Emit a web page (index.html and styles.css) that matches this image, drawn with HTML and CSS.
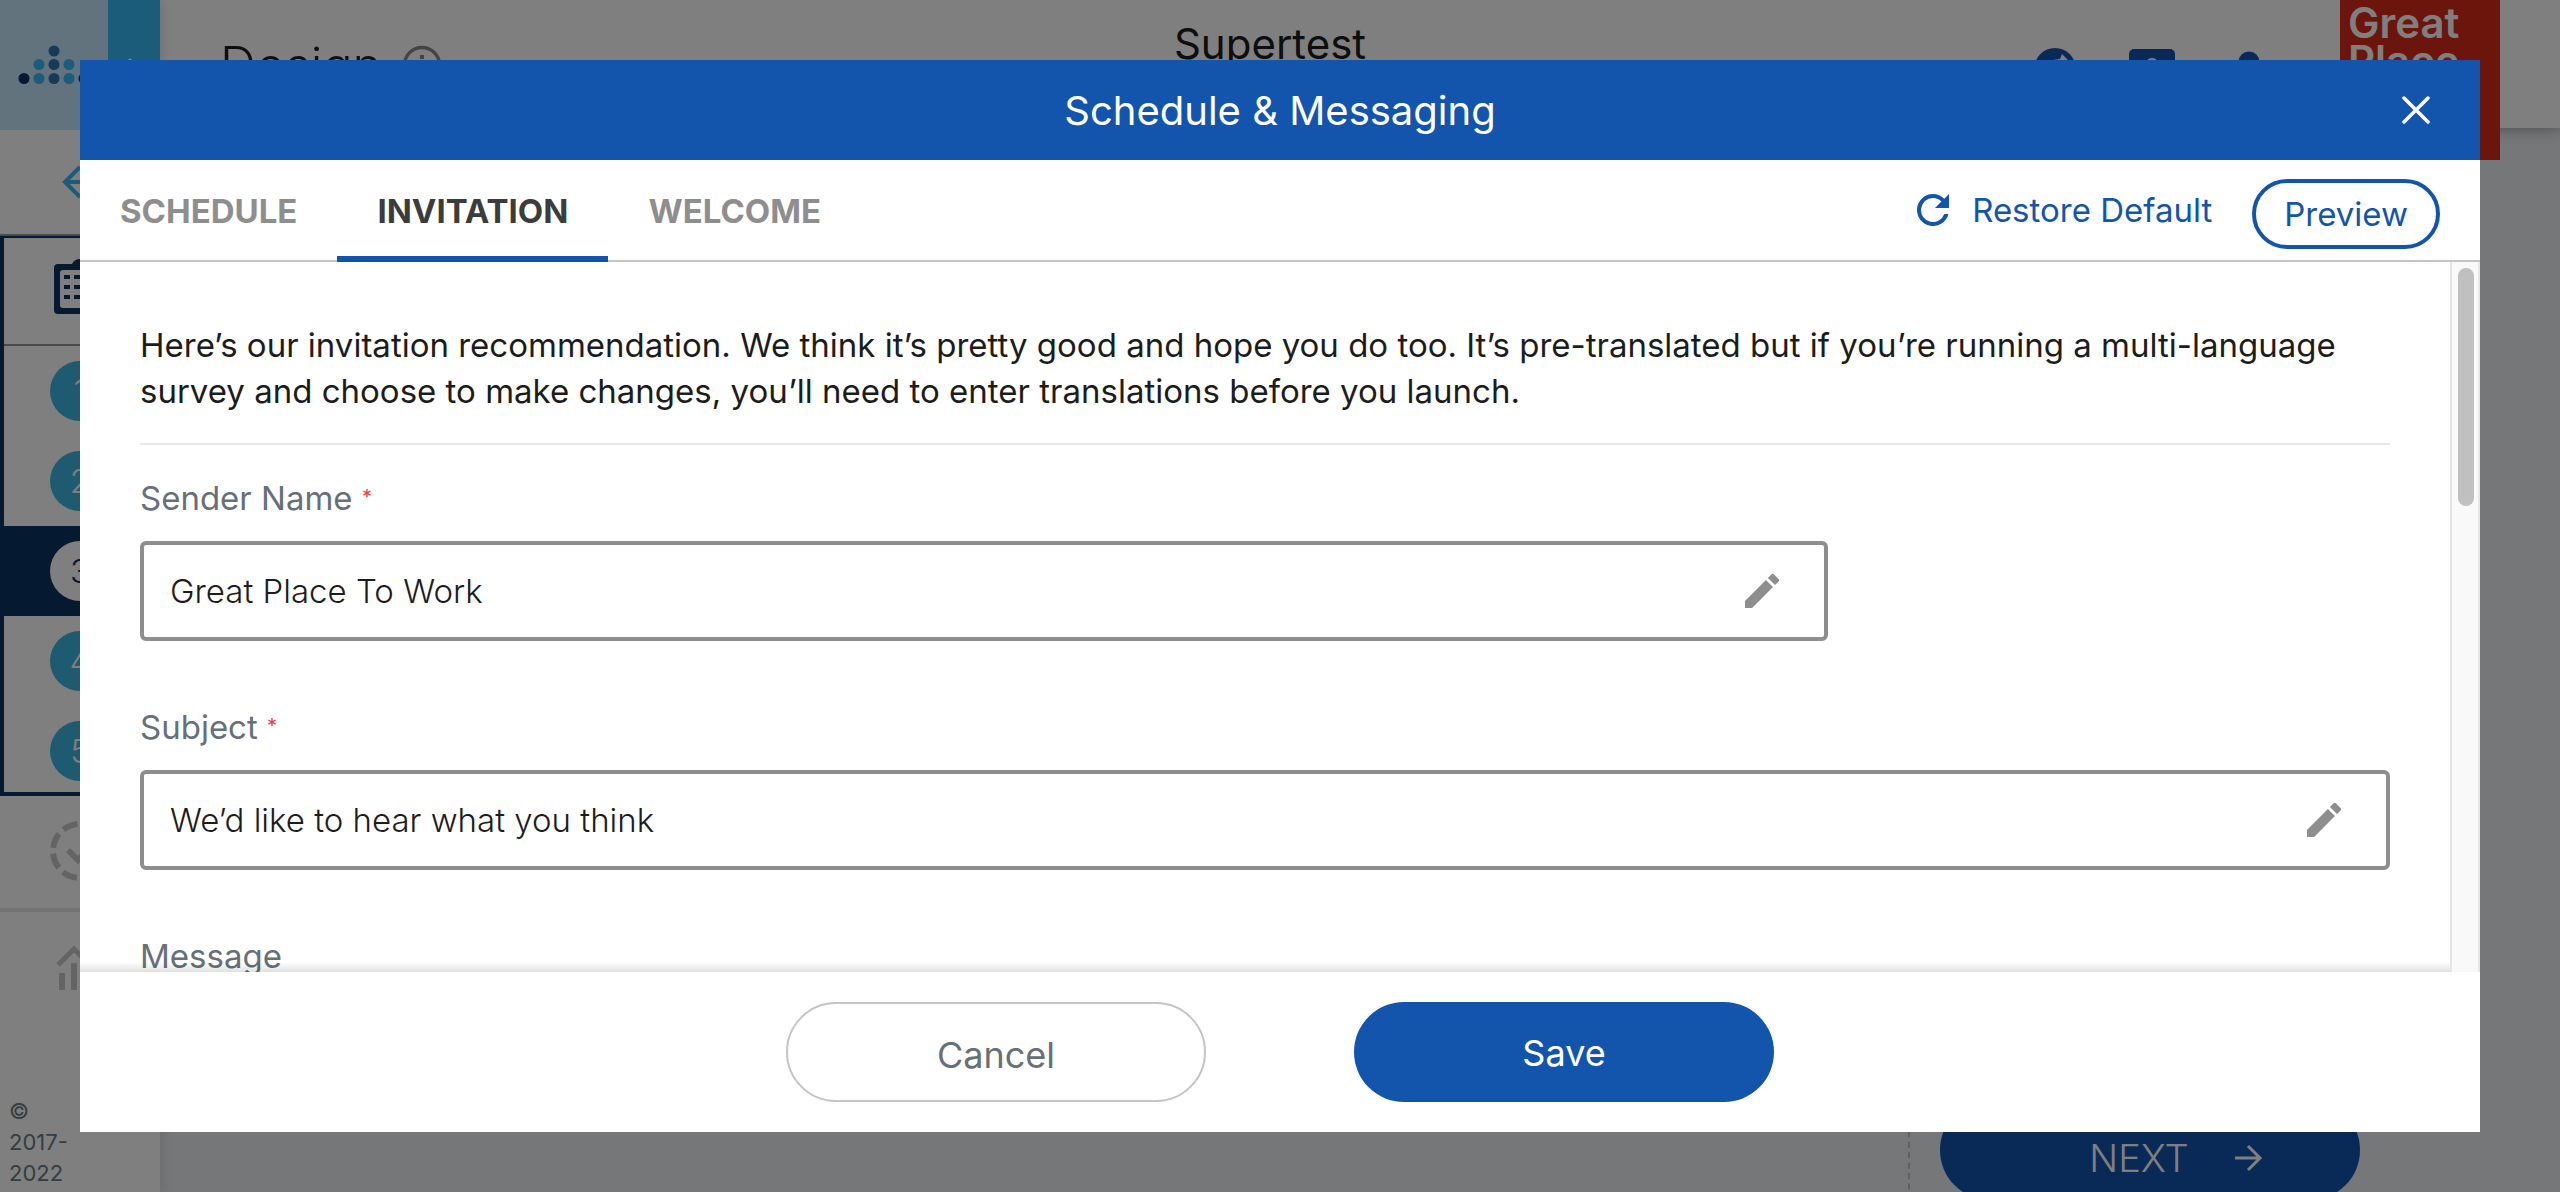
FILE: index.html
```html
<!DOCTYPE html>
<html lang="en">
<head>
<meta charset="utf-8">
<meta name="viewport" content="width=device-width, initial-scale=1">
<title>Schedule &amp; Messaging</title>
<link rel="stylesheet" href="styles.css">
</head>
<body>
<div class="app">
  <nav class="sidebar" aria-label="Survey steps">
    <div class="brand">
      <a class="brand-logo" href="#" aria-label="Home">
        <svg width="108" height="130" viewBox="0 0 108 130">
          <circle cx="54" cy="51" r="5.5" fill="#2b74b4"/>
          <circle cx="39" cy="64.500" r="5.500" fill="#38b8f6"/><circle cx="54" cy="64.500" r="5.500" fill="#2b74b4"/><circle cx="69" cy="64.500" r="5.500" fill="#38b8f6"/>
          <circle cx="24" cy="78.500" r="5.500" fill="#0a3460"/><circle cx="39" cy="78.500" r="5.500" fill="#38b8f6"/><circle cx="54" cy="78.500" r="5.500" fill="#2b74b4"/><circle cx="69" cy="78.500" r="5.500" fill="#38b8f6"/><circle cx="84" cy="78.500" r="5.500" fill="#0a3460"/>
        </svg>
      </a>
      <button class="brand-toggle" type="button" aria-label="Collapse menu">
        <svg width="52" height="130" viewBox="0 0 52 130" fill="none" stroke="#fff" stroke-width="3"><path d="M15 67l7-7 7 7"/></svg>
      </button>
    </div>
    <a class="back" href="#" aria-label="Back">
      <svg width="36" height="36" viewBox="0 0 36 36" fill="none" stroke="#38b8f6" stroke-width="4"><path d="M18 3L3 18l15 15M3 18h31"/></svg>
    </a>
    <div class="design-group">
      <a class="group-head" href="#" aria-label="Design">
        <svg width="52" height="56" viewBox="0 0 52 56"><path fill="#0a3460" fill-rule="evenodd" d="M4 6h14a9 9 0 0 1 16 0h14a4 4 0 0 1 4 4v42a4 4 0 0 1-4 4H4a4 4 0 0 1-4-4V10a4 4 0 0 1 4-4zm5 6a3 3 0 0 0-3 3v32a3 3 0 0 0 3 3h34a3 3 0 0 0 3-3V15a3 3 0 0 0-3-3h-9H18zM10 17h6v4h-6zm10 0h22v4H20zM10 27h6v4h-6zm10 0h22v4H20zM10 37h6v4h-6zm10 0h22v4H20z"/></svg>
      </a>
      <ol class="steps">
        <li><a href="#">1</a></li>
        <li><a href="#">2</a></li>
        <li class="current"><a href="#">3</a></li>
        <li><a href="#">4</a></li>
        <li><a href="#">5</a></li>
      </ol>
    </div>
    <a class="stage stage-launch" href="#" aria-label="Launch">
      <svg width="60" height="60" viewBox="0 0 60 60" fill="none" stroke="#c8c8c8" stroke-width="6"><circle cx="30" cy="30" r="27" stroke-dasharray="15.200 6" stroke-dashoffset="-3"/><path d="M18 29l10 10 16-17"/></svg>
    </a>
    <a class="stage stage-report" href="#" aria-label="Report">
      <svg width="48" height="46" viewBox="0 0 48 46" fill="none" stroke="#c8c8c8"><path stroke-width="5" d="M2 20L18 4l14 14L46 4"/><path stroke-width="6" d="M6 28v17M18 18v27M30 28v17M42 18v27"/></svg>
    </a>
    <p class="copyright">© 2017-2022</p>
  </nav>

  <div class="main">
    <header class="topbar">
      <div class="topbar-inner">
        <h1 class="page-title">Design
          <svg width="40" height="40" viewBox="0 0 40 40"><circle cx="20" cy="20" r="17.500" fill="none" stroke="#888" stroke-width="3.500"/><path fill="#888" d="M18 10h4v4h-4zM18 17h4v13h-4z"/></svg>
        </h1>
        <span class="survey-name">Supertest</span>
        <div class="tools">
          <button type="button" aria-label="Explore"><svg width="48" height="48" viewBox="0 0 48 48"><circle cx="24" cy="24" r="21" fill="#1355ad"/><path fill="#fff" d="M22 15l7-1 2-5 7 7v12l-14 6z"/></svg></button>
          <button type="button" aria-label="Help"><svg width="48" height="48" viewBox="0 0 48 48"><rect x="1" y="4" width="46" height="38" rx="5" fill="#1355ad"/><circle cx="24" cy="20" r="7" fill="#fff"/></svg></button>
          <button type="button" aria-label="Account"><svg width="48" height="48" viewBox="0 0 48 48" fill="#1355ad"><circle cx="24" cy="17" r="10.500"/><path d="M4 44c0-12 8-16 20-16s20 4 20 16z"/></svg></button>
        </div>
      </div>
      <div class="company-logo">Great<br>Place</div>
    </header>
    <div class="workspace">
      <div class="page-actions">
        <button class="next" type="button">NEXT
          <svg width="28" height="28" viewBox="0 0 28 28" fill="none" stroke="#fff" stroke-width="3"><path d="M0 14h26M13 2l12 12-12 12"/></svg>
        </button>
      </div>
    </div>
  </div>
</div>

<div class="overlay">
  <section class="modal" role="dialog" aria-modal="true" aria-labelledby="dialog-title">
    <header class="modal-head">
      <h2 id="dialog-title">Schedule &amp; Messaging</h2>
      <button class="close" type="button" aria-label="Close">
        <svg width="28" height="28" viewBox="0 0 28 28" fill="none" stroke="#fff" stroke-width="3.500" stroke-linecap="round"><path d="M2 2l24 24M26 2L2 26"/></svg>
      </button>
    </header>
    <div class="tabbar">
      <div class="tabs" role="tablist">
        <button class="tab" role="tab" type="button">SCHEDULE</button>
        <button class="tab active" role="tab" type="button" aria-selected="true">INVITATION</button>
        <button class="tab" role="tab" type="button">WELCOME</button>
      </div>
      <div class="tab-actions">
        <button class="restore" type="button">
          <svg width="32" height="32" viewBox="4 4 16 16" fill="#1355ad"><path d="M17.650 6.350A7.958 7.958 0 0 0 12 4a8 8 0 1 0 7.730 10h-2.080A6 6 0 1 1 12 6c1.660 0 3.140.69 4.220 1.780L13 11h7V4z"/></svg>
          Restore Default
        </button>
        <button class="preview" type="button">Preview</button>
      </div>
    </div>
    <div class="modal-body">
      <form class="content">
        <p class="intro">Here’s our invitation recommendation. We think it’s pretty good and hope you do too. It’s pre-translated but if you’re running a multi-language survey and choose to make changes, you’ll need to enter translations before you launch.</p>
        <div class="field field-short">
          <label for="sender">Sender Name <span class="required">*</span></label>
          <div class="control">
            <input id="sender" type="text" value="Great Place To Work">
            <svg width="34" height="34" viewBox="3 3 18 18" fill="#8e8e8e"><path d="M3 17.250V21h3.750L17.810 9.940l-3.750-3.750zM20.710 7.040a1 1 0 0 0 0-1.410l-2.340-2.340a1 1 0 0 0-1.410 0l-1.830 1.830 3.750 3.750z"/></svg>
          </div>
        </div>
        <div class="field">
          <label for="subject">Subject <span class="required">*</span></label>
          <div class="control">
            <input id="subject" type="text" value="We’d like to hear what you think">
            <svg width="34" height="34" viewBox="3 3 18 18" fill="#8e8e8e"><path d="M3 17.250V21h3.750L17.810 9.940l-3.750-3.750zM20.710 7.040a1 1 0 0 0 0-1.410l-2.340-2.340a1 1 0 0 0-1.410 0l-1.830 1.830 3.750 3.750z"/></svg>
          </div>
        </div>
        <div class="field">
          <label for="message">Message</label>
          <textarea id="message" rows="6"></textarea>
        </div>
      </form>
      <div class="scroll-track"><div class="scroll-thumb"></div></div>
    </div>
    <footer class="modal-foot">
      <button class="cancel" type="button">Cancel</button>
      <button class="save" type="button">Save</button>
    </footer>
  </section>
</div>
</body>
</html>
```
FILE: styles.css
```css
* { box-sizing: border-box; }

body {
  margin: 0;
  height: 100vh;
  overflow: hidden;
  font-family: Inter, "Liberation Sans", sans-serif;
  font-size: 33px;
  color: #1c1c1c;
}

button, input, textarea { font: inherit; color: inherit; }
button { margin: 0; padding: 0; border: 0; background: none; cursor: pointer; }
svg { display: block; flex: none; }
a { color: inherit; text-decoration: none; }

/* Application behind the dialog */
.app { display: flex; height: 100vh; overflow: hidden; background: #ebeef2; }

.sidebar {
  position: relative;
  z-index: 3;
  display: flex;
  flex-direction: column;
  flex: none;
  width: 160px;
  background: #fff;
  box-shadow: 0 0 12px rgba(0, 0, 0, .15);
}
.brand { display: flex; height: 130px; flex: none; }
.brand-logo { width: 108px; background: #c6e6fa; }
.brand-toggle { width: 52px; background: #38b8f6; }
.back {
  display: flex;
  align-items: center;
  justify-content: center;
  height: 106px;
  flex: none;
  border-bottom: 2px solid #949494;
}
.design-group { border: 4px solid #0a3460; border-top-width: 2px; border-right: 0; flex: none; }
.group-head {
  display: flex;
  align-items: center;
  height: 108px;
  padding: 0 0 10px 50px;
  border-bottom: 2px solid #949494;
}
.steps { margin: 0; padding: 0; list-style: none; }
.steps li { display: flex; align-items: center; height: 90px; padding-left: 46px; }
.steps li:last-child { height: 86px; padding-top: 4px; }
.steps a {
  width: 60px;
  border-radius: 50%;
  background: #3cb4e0;
  color: #fff;
  font-weight: 300;
  line-height: 60px;
  text-align: center;
}
.steps .current { background: #0a3460; }
.steps .current a { background: #fff; color: #0a3460; }
.stage { display: flex; flex: none; }
.stage-launch { height: 116px; padding: 25px 50px; border-bottom: 4px solid #e6e6e6; }
.stage-report { padding: 33px 56px; }
.copyright {
  width: 90px;
  margin: auto 0 3px;
  padding-left: 9px;
  color: #6c7a82;
  font-size: 22px;
  line-height: 31px;
}

.main { display: flex; flex: 1; flex-direction: column; min-width: 0; }
.topbar {
  position: relative;
  z-index: 2;
  display: flex;
  align-items: flex-start;
  height: 128px;
  flex: none;
  padding: 0 60px;
  background: #fff;
  box-shadow: 0 2px 12px rgba(0, 0, 0, .3);
}
.topbar-inner {
  display: grid;
  grid-template-columns: 1fr auto 1fr;
  flex: 1;
  height: 128px;
  padding-right: 20px;
}
.page-title {
  display: flex;
  align-items: center;
  gap: 20px;
  height: 130px;
  margin: 0;
  font-size: 50px;
  font-weight: 300;
}
.survey-name { padding-top: 20px; font-size: 42px; line-height: 48px; }
.tools { display: flex; justify-content: flex-end; gap: 49px; padding: 45px 47px 0 0; }
.tools button { height: 48px; }
.company-logo {
  width: 160px;
  height: 160px;
  padding: 4px 8px;
  background: #d62a1a;
  color: #fff;
  font-size: 42px;
  font-weight: 600;
  line-height: 38px;
}
.workspace { display: flex; flex: 1; align-items: flex-end; justify-content: flex-end; padding-right: 200px; }
.page-actions { margin-bottom: -8px; padding-left: 30px; border-left: 2px dashed #c0c0c0; }
.next {
  display: flex;
  align-items: center;
  justify-content: center;
  gap: 46px;
  width: 420px;
  height: 100px;
  padding: 16px 0 0 52px;
  border-radius: 50px;
  background: #1355ad;
  color: #fff;
  font-size: 38px;
  font-weight: 300;
}

/* Dialog */
.overlay { position: fixed; inset: 0; z-index: 10; display: flex; padding: 60px 80px; background: rgba(0, 0, 0, .5); }
.modal { display: flex; flex: 1; flex-direction: column; min-width: 0; background: #fff; }
.modal-head {
  display: grid;
  grid-template-columns: 1fr auto 1fr;
  align-items: center;
  height: 100px;
  flex: none;
  padding: 0 50px;
  background: #1355ad;
  color: #fff;
}
.modal-head h2 { grid-column: 2; margin: 0; padding-top: 2px; font-size: 40px; font-weight: 400; line-height: 48px; }
.close { justify-self: end; }

.tabbar { display: flex; justify-content: space-between; height: 102px; flex: none; border-bottom: 2px solid #c4c4c4; }
.tabs { display: flex; height: 102px; }
.tab { padding: 6px 40px 0; border-bottom: 6px solid transparent; color: #8e8e8e; font-weight: 700; }
.tab.active { border-bottom-color: #1355ad; color: #3c3c3c; }
.tab-actions { display: flex; align-items: center; gap: 40px; padding-right: 40px; color: #1355ad; }
.restore { display: flex; align-items: center; gap: 23px; }
.preview { height: 70px; margin-top: 8px; padding: 0 28px; border: 4px solid #1355ad; border-radius: 35px; }

.modal-body { display: flex; flex: 1; min-height: 0; }
.content { position: relative; flex: 1; padding: 60px 60px 0; overflow: hidden; }
.content::after {
  content: "";
  position: absolute;
  inset: auto 0 0;
  height: 10px;
  background: linear-gradient(rgba(0, 0, 0, 0), rgba(0, 0, 0, .12));
}
.intro { margin: 0 0 30px; padding-bottom: 29px; border-bottom: 2px solid #e8e8e8; line-height: 46px; }
.field { margin-bottom: 63px; }
.field-short { width: 75%; }
.field label { display: block; margin-bottom: 20px; color: #657078; line-height: 46px; }
.required { color: #ee3b45; font-size: 20px; vertical-align: 6px; line-height: 20px; }
.control {
  display: flex;
  align-items: center;
  height: 100px;
  padding: 0 45px 0 26px;
  border: 4px solid #8e8e8e;
  border-radius: 6px;
}
.control input { flex: 1; min-width: 0; padding: 0; border: 0; outline: 0; background: none; font-weight: 300; }
.field textarea { width: 100%; border: 4px solid #8e8e8e; border-radius: 6px; }
.scroll-track {
  width: 30px;
  flex: none;
  padding: 6px 4px 0 6px;
  border: solid #e6e6e6;
  border-width: 0 2px;
  background: #f9f9f9;
}
.scroll-thumb { width: 16px; height: 238px; border-radius: 8px; background: #c0c0c0; }

.modal-foot { display: flex; align-items: center; justify-content: center; gap: 148px; height: 160px; flex: none; }
.modal-foot button { width: 420px; height: 100px; border-radius: 50px; font-size: 36px; }
.modal-foot .cancel { padding-top: 6px; border: 2px solid #c4c4c4; color: #657078; }
.modal-foot .save { padding-top: 2px; background: #1355ad; color: #fff; }
```
